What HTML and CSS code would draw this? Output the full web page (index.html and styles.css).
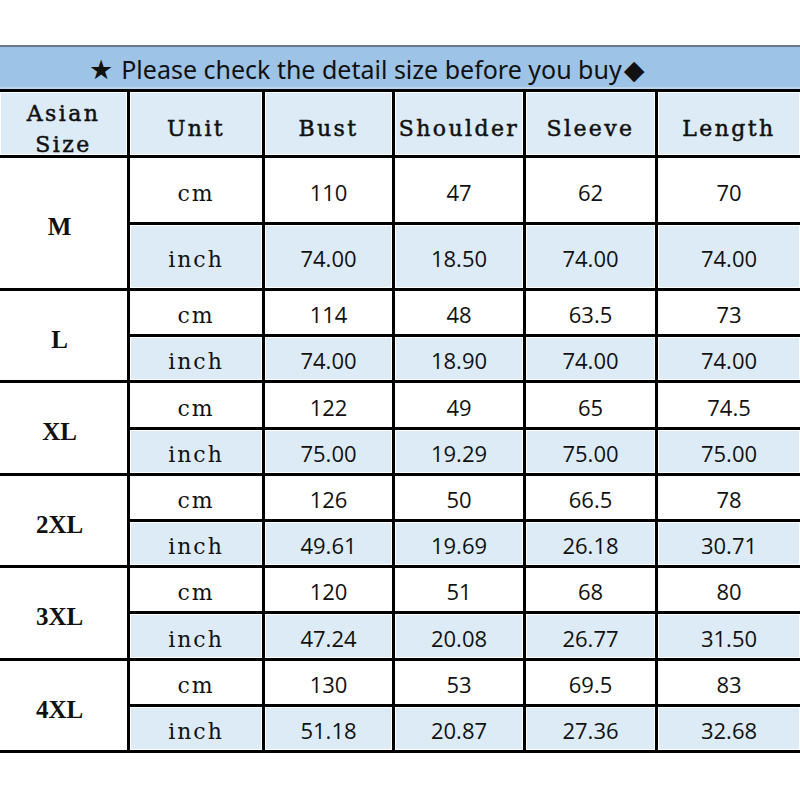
FILE: index.html
```html
<!DOCTYPE html>
<html>
<head>
<meta charset="utf-8">
<link rel="stylesheet" href="styles.css">
</head>
<body>
<section class="chart">
  <div class="banner"><span class="sym">★</span><span class="msg">Please check the detail size before you buy</span><span class="sym dia">◆</span></div>
  <div class="grid">
    <div class="cell head"><span>Asian<br>Size</span></div>
    <div class="cell head">Unit</div>
    <div class="cell head">Bust</div>
    <div class="cell head">Shoulder</div>
    <div class="cell head">Sleeve</div>
    <div class="cell head">Length</div>

    <div class="cell size">M</div>
    <div class="cell unit">cm</div>
    <div class="cell num">110</div><div class="cell num">47</div><div class="cell num">62</div><div class="cell num">70</div>
    <div class="cell unit alt">inch</div>
    <div class="cell num alt">74.00</div><div class="cell num alt">18.50</div><div class="cell num alt">74.00</div><div class="cell num alt">74.00</div>

    <div class="cell size">L</div>
    <div class="cell unit">cm</div>
    <div class="cell num">114</div><div class="cell num">48</div><div class="cell num">63.5</div><div class="cell num">73</div>
    <div class="cell unit alt">inch</div>
    <div class="cell num alt">74.00</div><div class="cell num alt">18.90</div><div class="cell num alt">74.00</div><div class="cell num alt">74.00</div>

    <div class="cell size">XL</div>
    <div class="cell unit">cm</div>
    <div class="cell num">122</div><div class="cell num">49</div><div class="cell num">65</div><div class="cell num">74.5</div>
    <div class="cell unit alt">inch</div>
    <div class="cell num alt">75.00</div><div class="cell num alt">19.29</div><div class="cell num alt">75.00</div><div class="cell num alt">75.00</div>

    <div class="cell size">2XL</div>
    <div class="cell unit">cm</div>
    <div class="cell num">126</div><div class="cell num">50</div><div class="cell num">66.5</div><div class="cell num">78</div>
    <div class="cell unit alt">inch</div>
    <div class="cell num alt">49.61</div><div class="cell num alt">19.69</div><div class="cell num alt">26.18</div><div class="cell num alt">30.71</div>

    <div class="cell size">3XL</div>
    <div class="cell unit">cm</div>
    <div class="cell num">120</div><div class="cell num">51</div><div class="cell num">68</div><div class="cell num">80</div>
    <div class="cell unit alt">inch</div>
    <div class="cell num alt">47.24</div><div class="cell num alt">20.08</div><div class="cell num alt">26.77</div><div class="cell num alt">31.50</div>

    <div class="cell size">4XL</div>
    <div class="cell unit">cm</div>
    <div class="cell num">130</div><div class="cell num">53</div><div class="cell num">69.5</div><div class="cell num">83</div>
    <div class="cell unit alt">inch</div>
    <div class="cell num alt">51.18</div><div class="cell num alt">20.87</div><div class="cell num alt">27.36</div><div class="cell num alt">32.68</div>
  </div>
</section>
</body>
</html>
```

FILE: styles.css
```css
html, body {
  margin: 0;
  padding: 0;
  background: #ffffff;
}

.chart {
  width: 800px;
  padding-top: 45px;
}

.banner {
  height: 42px;
  border-top: 2px solid #6b7784;
  background: #9dc3e6;
  box-shadow: inset 0 -2px 0 #bcd5ec;
  box-sizing: content-box;
  padding-left: 89px;
  display: flex;
  align-items: center;
  font-family: "Noto Sans", "Open Sans", sans-serif;
  font-size: 25px;
  color: #111;
  white-space: nowrap;
}

.banner .msg {
  padding-top: 2px;
}

.banner .sym {
  font-family: "DejaVu Sans", sans-serif;
  font-size: 27px;
  margin-right: 8px;
  padding-top: 2px;
}

.banner .dia {
  margin-left: 2px;
  margin-right: 0;
  font-size: 27px;
}

.grid {
  display: grid;
  grid-template-columns: 127px 132px 127px 128px 129px 142px;
  grid-template-rows: 63px 64px 63px 43px 43px 44px 43px 43px 43px 43px 44px 43px 43px;
  gap: 3px;
  background: #000;
  border-top: 3px solid #000;
  border-bottom: 3px solid #000;
}

.cell {
  background: #fff;
  display: flex;
  align-items: center;
  justify-content: center;
  color: #111;
}

.head {
  background: #ddebf7;
  box-shadow: inset 0 0 0 1px #fff;
  font-family: "DejaVu Serif", "Liberation Serif", serif;
  font-size: 22px;
  font-weight: normal;
  -webkit-text-stroke: 0.5px #111;
  letter-spacing: 2.4px;
  line-height: 31px;
  text-align: center;
  padding-top: 10px;
}

.size {
  grid-column: 1;
  grid-row: span 2;
  font-family: "Liberation Serif", "Times New Roman", serif;
  font-weight: bold;
  font-size: 25px;
  padding-top: 8px;
  padding-right: 8px;
}

.unit {
  font-family: "DejaVu Serif", "Liberation Serif", serif;
  font-size: 22px;
  letter-spacing: 2px;
  padding-top: 6px;
}

.num {
  font-family: "Open Sans", sans-serif;
  font-size: 22px;
  padding-top: 3px;
}

.alt {
  background: #ddebf7;
  box-shadow: inset 0 0 0 1px #fff;
}
```
